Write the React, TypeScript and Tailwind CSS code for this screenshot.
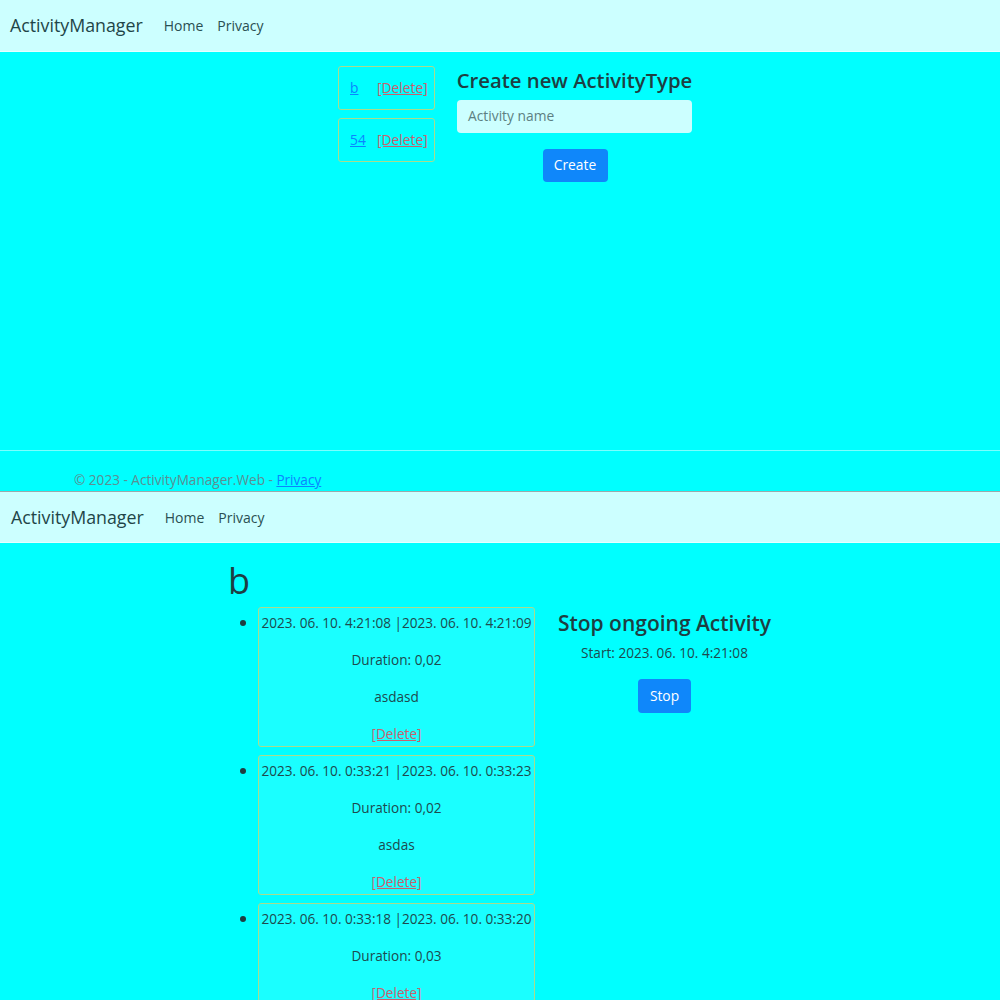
import React from "react";

const font = { fontFamily: '"Open Sans", "Noto Sans", sans-serif' };

type Entry = { range: string; duration: string; name?: string };

const entries: Entry[] = [
  { range: "2023. 06. 10. 4:21:08 |2023. 06. 10. 4:21:09", duration: "0,02", name: "asdasd" },
  { range: "2023. 06. 10. 0:33:21 |2023. 06. 10. 0:33:23", duration: "0,02", name: "asdas" },
  { range: "2023. 06. 10. 0:33:18 |2023. 06. 10. 0:33:20", duration: "0,03" },
];

function Navbar({ top }: { top?: boolean }) {
  return (
    <div
      className={
        "flex h-[52px] items-center bg-[#ccffff] border-b border-[#e6ffff] " +
        (top ? "pl-[10px]" : "pl-[11px] border-t border-t-[#9aa9aa]")
      }
    >
      <span className="text-[17.8px] text-[#1f4548] mr-[21px]">ActivityManager</span>
      <span className="text-[14px] text-[#2a4f52] mr-[14px]">Home</span>
      <span className="text-[14px] text-[#2a4f52]">Privacy</span>
    </div>
  );
}

export default function App() {
  return (
    <div className="w-[1000px] h-[1000px] overflow-hidden bg-[#00ffff]" style={font}>
      {/* first page */}
      <Navbar top />
      <div className="h-[398px] flex pl-[338px] pt-[14px]">
        <div className="flex flex-col gap-[8px]">
          {["b", "54"].map((n) => (
            <div key={n} className="w-[97px] h-[44px] border border-[#a9dc8c] rounded-[3px] flex items-center pl-[11px] text-[13.8px]">
              <a className="w-[27px] text-[#0b84ff] underline">{n}</a>
              <a className="text-[#c8616e] underline">[Delete]</a>
            </div>
          ))}
        </div>
        <div className="ml-[22px] w-[235px] flex flex-col items-center">
          <h2 className="text-[20.3px] font-semibold text-[#1e3e42] leading-[30px] mt-[-1px] whitespace-nowrap">Create new ActivityType</h2>
          <div className="mt-[5px] w-full h-[33px] rounded-[4px] bg-[#ccffff] flex items-center pl-[11px] text-[13.8px] text-[#5d7f82]">
            Activity name
          </div>
          <button className="mt-[16px] w-[65px] h-[33px] rounded-[4px] bg-[#0f87fa] text-white text-[13.8px] ml-[1px]">Create</button>
        </div>
      </div>
      <div className="h-[41px] border-t border-[#7affff] pl-[74px] pt-[19px] text-[13.6px] text-[#5b8f93] leading-[20px]">
        © 2023 - ActivityManager.Web - <a className="text-[#0b84ff] underline">Privacy</a>
      </div>

      {/* second page */}
      <Navbar />
      <div className="flex pl-[228px] pt-[16px]">
        <div>
          <h1 className="text-[36px] text-[#1e3e42] leading-[44px]">b</h1>
          <ul className="list-disc pl-[30px] mt-[4px] text-[#1e4a4e] marker:text-[#1e3e42]">
            {entries.map((e) => (
              <li key={e.range} className="mb-[8px]">
                <div className="w-[277px] h-[140px] border border-[#a9dc8c] rounded-[3px] bg-[#1affff] flex flex-col items-center pt-[5px] text-[13.6px] leading-[20px]">
                  <p className="whitespace-nowrap">{e.range}</p>
                  <p className="mt-[17px]">Duration: {e.duration}</p>
                  {e.name && <p className="mt-[17px]">{e.name}</p>}
                  <a className="mt-[17px] text-[#c8616e] underline">[Delete]</a>
                </div>
              </li>
            ))}
          </ul>
        </div>
        <div className="ml-[22px] mt-[49px] w-[215px] flex flex-col items-center">
          <h2 className="text-[21px] font-semibold text-[#1e3e42] leading-[30px] whitespace-nowrap">Stop ongoing Activity</h2>
          <p className="text-[13.6px] text-[#1e4a4e] mt-[5px]">Start: 2023. 06. 10. 4:21:08</p>
          <button className="mt-[16px] w-[53px] h-[34px] rounded-[4px] bg-[#0f87fa] text-white text-[13.8px]">Stop</button>
        </div>
      </div>
    </div>
  );
}
